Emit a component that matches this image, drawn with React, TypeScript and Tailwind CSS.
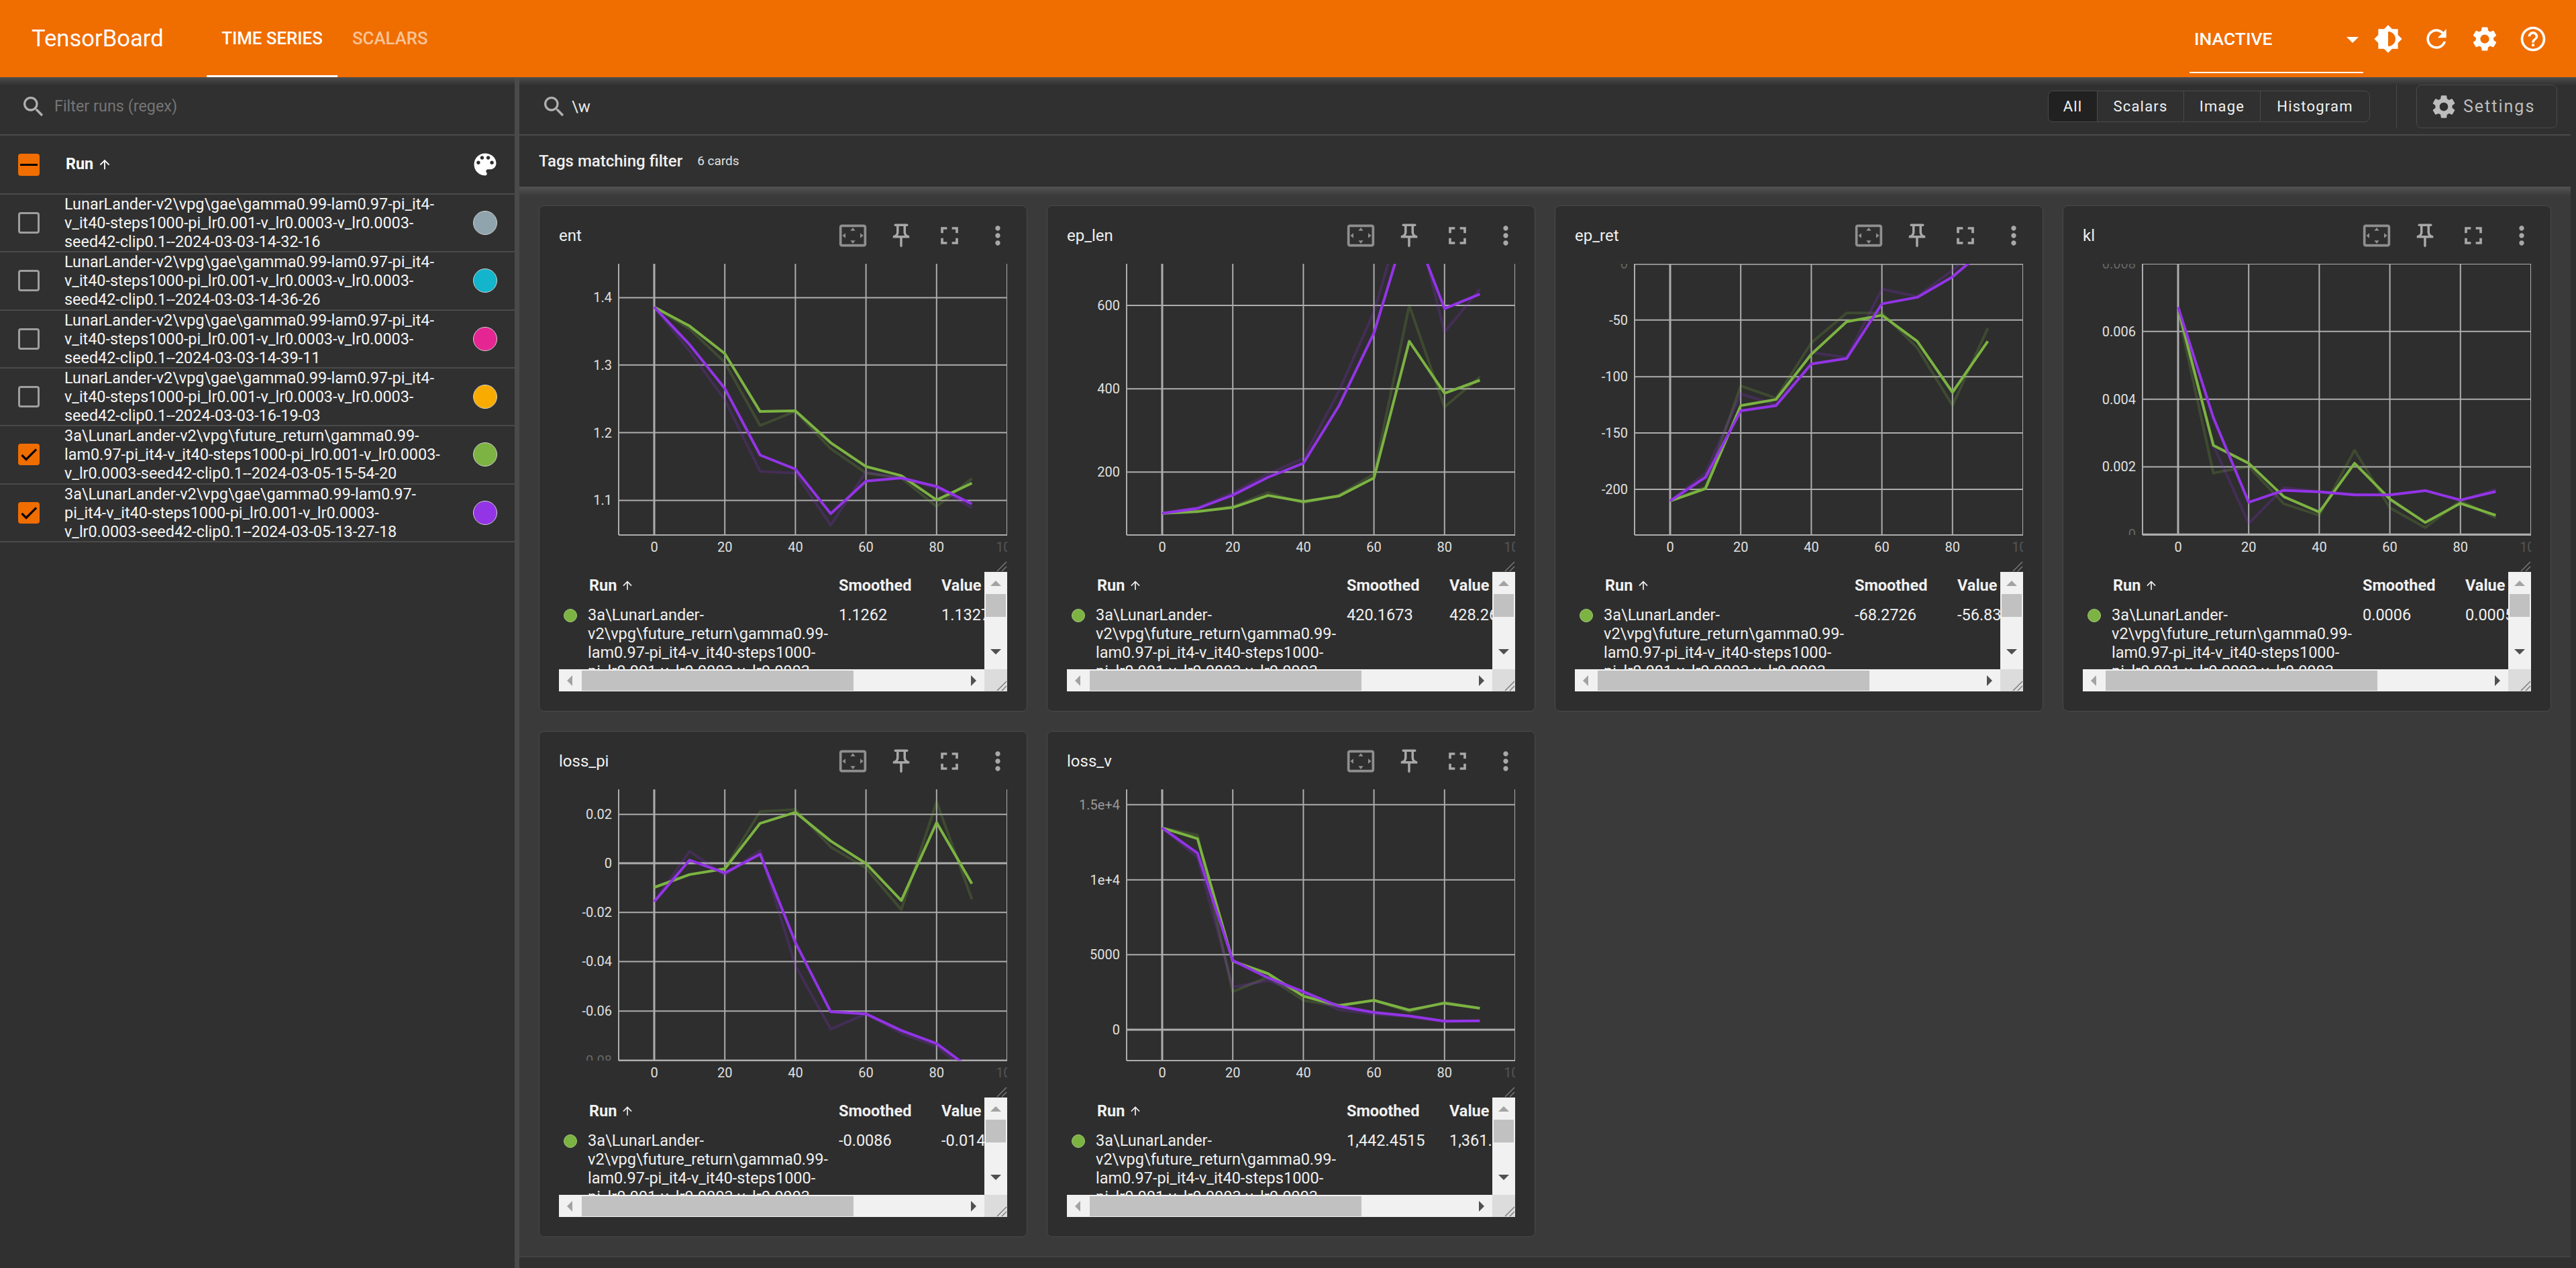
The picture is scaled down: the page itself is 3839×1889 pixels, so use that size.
const ICONS = {
  search: "M15.5 14h-.79l-.28-.27A6.471 6.471 0 0 0 16 9.5 6.5 6.5 0 1 0 9.5 16c1.61 0 3.09-.59 4.23-1.57l.27.28v.79l5 4.99L20.49 19l-4.99-5zm-6 0C7.01 14 5 11.99 5 9.5S7.01 5 9.5 5 14 7.01 14 9.5 11.99 14 9.5 14z",
  brightness: "M20 15.31L23.31 12 20 8.69V4h-4.69L12 .69 8.69 4H4v4.69L.69 12 4 15.31V20h4.69L12 23.31 15.31 20H20v-4.69zM12 18V6c3.31 0 6 2.69 6 6s-2.69 6-6 6z",
  refresh: "M17.65 6.35C16.2 4.9 14.21 4 12 4c-4.42 0-7.99 3.58-7.99 8s3.57 8 7.99 8c3.73 0 6.84-2.55 7.73-6h-2.08c-.82 2.33-3.04 4-5.65 4-3.31 0-6-2.69-6-6s2.69-6 6-6c1.66 0 3.14.69 4.22 1.78L13 11h7V4l-2.35 2.35z",
  settings: "M19.14 12.94c.04-.3.06-.61.06-.94 0-.32-.02-.64-.07-.94l2.03-1.58c.18-.14.23-.41.12-.61l-1.92-3.32c-.12-.22-.37-.29-.59-.22l-2.39.96c-.5-.38-1.03-.7-1.62-.94l-.36-2.54c-.04-.24-.24-.41-.48-.41h-3.84c-.24 0-.43.17-.47.41l-.36 2.54c-.59.24-1.13.57-1.62.94l-2.39-.96c-.22-.08-.47 0-.59.22L2.74 8.87c-.12.21-.08.47.12.61l2.03 1.58c-.05.3-.09.63-.09.94s.02.64.07.94l-2.03 1.58c-.18.14-.23.41-.12.61l1.92 3.32c.12.22.37.29.59.22l2.39-.96c.5.38 1.03.7 1.62.94l.36 2.54c.05.24.24.41.48.41h3.84c.24 0 .44-.17.47-.41l.36-2.54c.59-.24 1.13-.56 1.62-.94l2.39.96c.22.08.47 0 .59-.22l1.92-3.32c.12-.22.07-.47-.12-.61l-2.01-1.58zM12 15.6c-1.98 0-3.6-1.62-3.6-3.6s1.62-3.6 3.6-3.6 3.6 1.62 3.6 3.6-1.62 3.6-3.6 3.6z",
  help: "M11 18h2v-2h-2v2zm1-16C6.48 2 2 6.48 2 12s4.48 10 10 10 10-4.48 10-10S17.52 2 12 2zm0 18c-4.41 0-8-3.59-8-8s3.59-8 8-8 8 3.59 8 8-3.59 8-8 8zm0-14c-2.21 0-4 1.79-4 4h2c0-1.1.9-2 2-2s2 .9 2 2c0 2-3 1.75-3 5h2c0-2.25 3-2.5 3-5 0-2.21-1.79-4-4-4z",
  palette: "M12 3c-4.97 0-9 4.03-9 9s4.03 9 9 9c.83 0 1.5-.67 1.5-1.5 0-.39-.15-.74-.39-1.01-.23-.26-.38-.61-.38-.99 0-.83.67-1.5 1.5-1.5H16c2.76 0 5-2.24 5-5 0-4.42-4.03-8-9-8zm-5.5 9c-.83 0-1.5-.67-1.5-1.5S5.67 9 6.5 9 8 9.67 8 10.5 7.33 12 6.5 12zm3-4C8.67 8 8 7.33 8 6.5S8.67 5 9.5 5s1.5.67 1.5 1.5S10.33 8 9.5 8zm5 0c-.83 0-1.5-.67-1.5-1.5S13.67 5 14.5 5s1.5.67 1.5 1.5S15.33 8 14.5 8zm3 4c-.83 0-1.5-.67-1.5-1.5S16.67 9 17.5 9s1.5.67 1.5 1.5-.67 1.5-1.5 1.5z",
  pin: "M14 4v5c0 1.12.37 2.16 1 3H9c.65-.86 1-1.9 1-3V4h4m3-2H7c-.55 0-1 .45-1 1s.45 1 1 1h1v5c0 1.66-1.34 3-3 3v2h5.97v7l1 1 1-1v-7H19v-2c-1.66 0-3-1.34-3-3V4h1c.55 0 1-.45 1-1s-.45-1-1-1z",
  fullscreen: "M7 14H5v5h5v-2H7v-3zm-2-4h2V7h3V5H5v5zm12 7h-3v2h5v-5h-2v3zM14 5v2h3v3h2V5h-5z",
  more: "M12 8c1.1 0 2-.9 2-2s-.9-2-2-2-2 .9-2 2 .9 2 2 2zm0 2c-1.1 0-2 .9-2 2s.9 2 2 2 2-.9 2-2-.9-2-2-2zm0 6c-1.1 0-2 .9-2 2s.9 2 2 2 2-.9 2-2-.9-2-2-2z",
  fit: "M12.01 5.5L10 8h4l-1.99-2.5zM18 10v4l2.5-1.99L18 10zM6 10l-2.5 2.01L6 14v-4zm8 6h-4l2.01 2.5L14 16zm7-13H3c-1.1 0-2 .9-2 2v14c0 1.1.9 2 2 2h18c1.1 0 2-.9 2-2V5c0-1.1-.9-2-2-2zm0 16.01H3V4.99h18v14.02z",
  arrowUp: "M4 12l1.41 1.41L11 7.83V20h2V7.83l5.58 5.59L20 12l-8-8-8 8z",
};

function Icon({ d, className }: { d: string; className?: string }) {
  return (
    <svg viewBox="0 0 24 24" className={className} fill="currentColor">
      <path d={d} />
    </svg>
  );
}

const RUNS = [
  { name: "LunarLander-v2\\vpg\\gae\\gamma0.99-lam0.97-pi_it4-v_it40-steps1000-pi_lr0.001-v_lr0.0003-v_lr0.0003-seed42-clip0.1--2024-03-03-14-32-16", dot: "bg-[#90a4ae]", checked: false },
  { name: "LunarLander-v2\\vpg\\gae\\gamma0.99-lam0.97-pi_it4-v_it40-steps1000-pi_lr0.001-v_lr0.0003-v_lr0.0003-seed42-clip0.1--2024-03-03-14-36-26", dot: "bg-[#12b5cb]", checked: false },
  { name: "LunarLander-v2\\vpg\\gae\\gamma0.99-lam0.97-pi_it4-v_it40-steps1000-pi_lr0.001-v_lr0.0003-v_lr0.0003-seed42-clip0.1--2024-03-03-14-39-11", dot: "bg-[#e52592]", checked: false },
  { name: "LunarLander-v2\\vpg\\gae\\gamma0.99-lam0.97-pi_it4-v_it40-steps1000-pi_lr0.001-v_lr0.0003-v_lr0.0003-seed42-clip0.1--2024-03-03-16-19-03", dot: "bg-[#f9ab00]", checked: false },
  { name: "3a\\LunarLander-v2\\vpg\\future_return\\gamma0.99-lam0.97-pi_it4-v_it40-steps1000-pi_lr0.001-v_lr0.0003-v_lr0.0003-seed42-clip0.1--2024-03-05-15-54-20", dot: "bg-[#7cb342]", checked: true },
  { name: "3a\\LunarLander-v2\\vpg\\gae\\gamma0.99-lam0.97-pi_it4-v_it40-steps1000-pi_lr0.001-v_lr0.0003-v_lr0.0003-seed42-clip0.1--2024-03-05-13-27-18", dot: "bg-[#9334e6]", checked: true },
];

const GREEN_RUN =
  "3a\\LunarLander-v2\\vpg\\future_return\\gamma0.99-lam0.97-pi_it4-v_it40-steps1000-pi_lr0.001-v_lr0.0003-v_lr0.0003-seed42-clip0.1--2024-03-05-15-54-20";

type Tick = { at: number; label: string; faint?: boolean; dim?: boolean };
type Chart = {
  title: string;
  smoothed: string;
  value: string;
  // y values are pixels read off the plot: top and k turn them into plot pixels
  top: number;
  k: number;
  ticks: Tick[];
  greenSmooth: number[];
  greenRaw: number[];
  purpleSmooth: number[];
  purpleRaw: number[];
};

const CHARTS: Chart[] = [
  {
    title: "ent", smoothed: "1.1262", value: "1.1327", top: 192, k: 2.063,
    ticks: [{ at: 296, label: "1.4" }, { at: 503, label: "1.3" }, { at: 711, label: "1.2" }, { at: 919, label: "1.1" }],
    greenSmooth: [325, 383, 468, 646, 644, 742, 815, 843, 918, 866],
    greenRaw: [325, 392, 495, 689, 645, 760, 835, 850, 938, 852],
    purpleSmooth: [325, 440, 575, 780, 823, 960, 860, 850, 876, 930],
    purpleRaw: [325, 460, 610, 830, 835, 995, 832, 852, 880, 942],
  },
  {
    title: "ep_len", smoothed: "420.1673", value: "428.2617", top: 192, k: 2.063,
    ticks: [{ at: 320, label: "600" }, { at: 576, label: "400" }, { at: 832, label: "200" }],
    greenSmooth: [959, 953, 941, 904, 923, 906, 850, 430, 590, 550],
    greenRaw: [959, 955, 938, 895, 927, 903, 838, 320, 632, 540],
    purpleSmooth: [959, 944, 903, 848, 805, 630, 405, 47, 330, 285],
    purpleRaw: [959, 941, 895, 838, 790, 585, 340, -30, 402, 270],
  },
  {
    title: "ep_ret", smoothed: "-68.2726", value: "-56.8312", top: 192, k: 2.063,
    ticks: [{ at: 192, label: "0", faint: true }, { at: 365, label: "-50" }, { at: 539, label: "-100" }, { at: 712, label: "-150" }, { at: 885, label: "-200" }],
    greenSmooth: [921, 883, 628, 609, 470, 370, 350, 430, 587, 430],
    greenRaw: [921, 878, 567, 605, 435, 343, 343, 450, 627, 390],
    purpleSmooth: [921, 848, 644, 628, 500, 483, 315, 295, 232, 140],
    purpleRaw: [921, 835, 592, 625, 465, 480, 270, 292, 212, 118],
  },
  {
    title: "kl", smoothed: "0.0006", value: "0.0005", top: 192, k: 2.063,
    ticks: [{ at: 192, label: "0.008", faint: true }, { at: 400, label: "0.006" }, { at: 608, label: "0.004" }, { at: 816, label: "0.002" }, { at: 1024, label: "0", faint: true }],
    greenSmooth: [330, 750, 805, 908, 955, 805, 915, 987, 928, 965],
    greenRaw: [340, 835, 815, 930, 965, 765, 942, 1003, 920, 972],
    purpleSmooth: [325, 665, 925, 888, 893, 902, 902, 889, 918, 892],
    purpleRaw: [325, 750, 990, 880, 892, 900, 902, 888, 920, 885],
  },
  {
    title: "loss_pi", smoothed: "-0.0086", value: "-0.0143", top: 186, k: 1.938,
    ticks: [{ at: 258, label: "0.02" }, { at: 399, label: "0" }, { at: 541, label: "-0.02" }, { at: 683, label: "-0.04" }, { at: 826, label: "-0.06" }, { at: 968, label: "-0.08", faint: true }],
    greenSmooth: [469, 432, 415, 284, 252, 335, 400, 507, 282, 458],
    greenRaw: [469, 432, 415, 250, 244, 352, 413, 533, 222, 503],
    purpleSmooth: [510, 390, 427, 373, 628, 828, 834, 882, 920, 995],
    purpleRaw: [510, 365, 433, 362, 695, 878, 834, 890, 928, 1010],
  },
  {
    title: "loss_v", smoothed: "1,442.4515", value: "1,361.6208", top: 186, k: 1.938,
    ticks: [{ at: 230, label: "1.5e+4", dim: true }, { at: 447, label: "1e+4" }, { at: 663, label: "5000" }, { at: 880, label: "0" }],
    greenSmooth: [297, 328, 682, 718, 783, 810, 795, 823, 803, 818],
    greenRaw: [297, 318, 770, 728, 795, 812, 795, 828, 800, 818],
    purpleSmooth: [297, 370, 680, 730, 770, 812, 830, 840, 855, 854],
    purpleRaw: [297, 382, 757, 738, 775, 822, 835, 842, 857, 854],
  },
];

const PLOT_LEFT = 89;
const PLOT_W = 579;
const PLOT_H = 404;
const X0 = PLOT_LEFT + 53;
const X_STEP = 5.26;

function LineChart({ chart, id }: { chart: Chart; id: number }) {
  const toY = (p: number) => (p - chart.top) / chart.k;
  const pts = (ys: number[]) =>
    ys.map((p, i) => `${X0 + i * 10 * X_STEP},${toY(p).toFixed(1)}`).join(" ");
  const xTicks = [0, 20, 40, 60, 80, 100];

  return (
    <svg width={668} height={442} className="block font-['Roboto',sans-serif]">
      <defs>
        <clipPath id={`plot-${id}`}>
          <rect x={PLOT_LEFT} y={0} width={PLOT_W} height={PLOT_H} />
        </clipPath>
        <clipPath id={`ylabels-${id}`}>
          <rect x={0} y={0} width={PLOT_LEFT} height={PLOT_H} />
        </clipPath>
      </defs>

      {xTicks.map((t) => (
        <line key={t} x1={X0 + t * X_STEP} x2={X0 + t * X_STEP} y1={0} y2={PLOT_H} stroke="#adadad" strokeWidth={t === 0 ? 3 : 2} />
      ))}
      {chart.ticks.map((t) => (
        <line key={t.label} x1={PLOT_LEFT} x2={PLOT_LEFT + PLOT_W} y1={toY(t.at)} y2={toY(t.at)} stroke="#adadad" strokeWidth={t.label === "0" ? 3 : 2} />
      ))}
      <line x1={PLOT_LEFT} x2={PLOT_LEFT} y1={0} y2={PLOT_H} stroke="#adadad" strokeWidth={2} />
      <line x1={PLOT_LEFT} x2={PLOT_LEFT + PLOT_W} y1={PLOT_H} y2={PLOT_H} stroke="#adadad" strokeWidth={2} />

      <g clipPath={`url(#plot-${id})`} fill="none" strokeWidth={4} strokeLinejoin="round">
        <polyline points={pts(chart.greenRaw)} stroke="#7cb342" strokeOpacity={0.22} />
        <polyline points={pts(chart.purpleRaw)} stroke="#9334e6" strokeOpacity={0.22} />
        <polyline points={pts(chart.greenSmooth)} stroke="#7cb342" />
        <polyline points={pts(chart.purpleSmooth)} stroke="#9334e6" />
      </g>

      <g clipPath={`url(#ylabels-${id})`} fontSize={20} textAnchor="end">
        {chart.ticks.map((t) => (
          <text key={t.label} x={79} y={toY(t.at) + 7} fill={t.faint ? "#666" : t.dim ? "#999" : "#e0e0e0"}>
            {t.label}
          </text>
        ))}
      </g>
      {xTicks.map((t) => (
        <text key={t} x={X0 + t * X_STEP} y={429} fontSize={20} textAnchor="middle" fill={t === 100 ? "#555" : "#e0e0e0"}>
          {t}
        </text>
      ))}
    </svg>
  );
}

function ResizeGrip({ className }: { className?: string }) {
  return (
    <svg viewBox="0 0 16 16" className={className}>
      <line x1="1" y1="15" x2="15" y2="1" stroke="#7a7a7a" strokeWidth="1.4" />
      <line x1="8" y1="15" x2="15" y2="8" stroke="#7a7a7a" strokeWidth="1.4" />
    </svg>
  );
}

function ChartCard({ chart, id }: { chart: Chart; id: number }) {
  return (
    <div className="h-[754px] rounded-lg border border-[#4a4a4a] bg-[#2e2e2e] pl-[29px] pr-[7px] pt-[8px]">
      <div className="flex h-[72px] items-center text-[#a8a8a8]">
        <div className="flex-1 text-[24px] text-[#f0f0f0]">{chart.title}</div>
        <button className="flex h-[72px] w-[72px] items-center justify-center">
          <Icon d={ICONS.fit} className="h-[44px] w-[44px] text-[#8f8f8f]" />
        </button>
        <button className="flex h-[72px] w-[72px] items-center justify-center">
          <Icon d={ICONS.pin} className="h-[42px] w-[42px]" />
        </button>
        <button className="flex h-[72px] w-[72px] items-center justify-center">
          <Icon d={ICONS.fullscreen} className="h-[44px] w-[44px]" />
        </button>
        <button className="flex h-[72px] w-[72px] items-center justify-center">
          <Icon d={ICONS.more} className="h-[44px] w-[44px]" />
        </button>
      </div>

      <div className="relative mt-[6px] h-[459px] w-[668px]">
        <LineChart chart={chart} id={id} />
        <ResizeGrip className="absolute bottom-0 right-0 h-[16px] w-[16px]" />
      </div>

      {/* tooltip table with its native-looking scrollbars on top */}
      <div className="relative h-[178px] w-[668px] overflow-hidden text-[23.5px] leading-[28px] text-[#f0f0f0]">
        <div className="flex pt-[6px] font-bold">
          <div className="flex w-[417px] items-center pl-[45px]">
            Run
            <Icon d={ICONS.arrowUp} className="ml-[6px] h-[20px] w-[20px] font-normal" />
          </div>
          <div className="w-[153px]">Smoothed</div>
          <div>Value</div>
        </div>
        <div className="flex pt-[16px]">
          <div className="w-[43px] shrink-0 pl-[7px] pt-[5px]">
            <div className="h-[20px] w-[20px] rounded-full border border-[#a5c97c] bg-[#7cb342]" />
          </div>
          <div className="w-[374px] shrink-0 pr-[6px]">{GREEN_RUN}</div>
          <div className="w-[153px] shrink-0">{chart.smoothed}</div>
          <div className="whitespace-nowrap">{chart.value}</div>
        </div>

        <div className="absolute right-0 top-0 flex h-full w-[34px] flex-col items-center bg-[#f1f1f1]">
          <div className="mt-[13px] h-0 w-0 border-x-[8px] border-b-[8px] border-x-transparent border-b-[#a3a3a3]" />
          <div className="mt-[12px] h-[34px] w-[30px] bg-[#c1c1c1]" />
          <div className="mt-[48px] h-0 w-0 border-x-[8px] border-t-[8px] border-x-transparent border-t-[#505050]" />
        </div>
        <div className="absolute bottom-0 left-0 right-[34px] flex h-[33px] items-center bg-[#f1f1f1]">
          <div className="ml-[12px] h-0 w-0 border-y-[8px] border-r-[8px] border-y-transparent border-r-[#a3a3a3]" />
          <div className="ml-[14px] h-[30px] w-[405px] bg-[#c1c1c1]" />
          <div className="ml-auto mr-[12px] h-0 w-0 border-y-[8px] border-l-[8px] border-y-transparent border-l-[#505050]" />
        </div>
        <div className="absolute bottom-0 right-0 flex h-[33px] w-[34px] items-end justify-end bg-[#dcdcdc]">
          <ResizeGrip className="h-[16px] w-[16px]" />
        </div>
      </div>
    </div>
  );
}

function Checkbox({ checked, mixed }: { checked?: boolean; mixed?: boolean }) {
  if (mixed) {
    return (
      <div className="flex h-[33px] w-[32px] shrink-0 items-center justify-center rounded-[4px] bg-[#f06d00]">
        <div className="h-[3px] w-[26px] bg-black" />
      </div>
    );
  }
  if (checked) {
    return (
      <div className="h-[32px] w-[32px] shrink-0 rounded-[4px] bg-[#f06d00]">
        <svg viewBox="0 0 24 24" className="h-full w-full" fill="none" stroke="#000" strokeWidth="2.4">
          <path d="M4.1 12.7 9 17.6 20.3 6.3" />
        </svg>
      </div>
    );
  }
  return <div className="h-[32px] w-[32px] shrink-0 rounded-[4px] border-[3px] border-[#9e9e9e]" />;
}

function Sidebar() {
  return (
    <aside className="flex w-[774px] shrink-0 flex-col border-r-[7px] border-[#4a4a4a] bg-[#303030]">
      <div className="flex h-[87px] shrink-0 items-center border-b-2 border-[#4a4a4a] pl-[30px] pt-[2px]">
        <Icon d={ICONS.search} className="h-[40px] w-[40px] text-[#b0b0b0]" />
        <span className="ml-[11px] text-[23.4px] text-[#757575]">Filter runs (regex)</span>
      </div>
      <div className="flex h-[88px] shrink-0 items-center border-b-2 border-[#4a4a4a] pl-[27px]">
        <Checkbox mixed />
        <div className="ml-[39px] flex items-center text-[23.4px] font-bold text-white">
          Run
          <Icon d={ICONS.arrowUp} className="ml-[6px] h-[22px] w-[22px]" />
        </div>
        <Icon d={ICONS.palette} className="ml-auto mr-[22px] h-[44px] w-[44px] text-white" />
      </div>
      {RUNS.map((run) => (
        <div key={run.name} className="flex h-[86.33px] shrink-0 items-center border-b-2 border-[#4a4a4a] pl-[27px]">
          <Checkbox checked={run.checked} />
          <div className="ml-[37px] w-[567px] text-[23.4px] leading-[28px] text-[#f5f5f5]">{run.name}</div>
          <div className={`ml-auto mr-[26px] h-[36px] w-[36px] rounded-full border border-[#d0d0d0] ${run.dot}`} />
        </div>
      ))}
    </aside>
  );
}

function Header() {
  return (
    <header className="relative flex h-[115px] shrink-0 items-center bg-[#f06d00] text-white">
      <div className="ml-[47px] w-[261px] text-[34.6px]">TensorBoard</div>
      <div className="flex h-full w-[195px] items-center justify-center border-b-[3px] border-white pt-[3px] text-[25.8px] font-medium">
        TIME SERIES
      </div>
      <div className="flex h-full items-center pl-[22px] text-[25.8px] font-medium text-white/60">SCALARS</div>

      <div className="relative ml-auto mr-[1px] flex h-full w-[259px] items-center pl-[7px] text-[26.5px] font-medium">
        INACTIVE
        <div className="absolute right-[7px] top-[55px] h-0 w-0 border-x-[9px] border-t-[9px] border-x-transparent border-t-white" />
        <div className="absolute bottom-[6px] left-0 right-0 h-[2px] bg-white" />
      </div>
      <div className="mr-[28px] flex">
        {[ICONS.brightness, ICONS.refresh, ICONS.settings, ICONS.help].map((d) => (
          <div key={d} className="flex h-[72px] w-[72px] items-center justify-center">
            <Icon d={d} className="h-[44px] w-[44px]" />
          </div>
        ))}
      </div>
      <div className="absolute left-0 right-0 top-full z-10 h-[12px] bg-gradient-to-b from-[#4d4d4d] to-transparent" />
    </header>
  );
}

function FilterChips() {
  const chips = [
    { label: "All", w: "w-[73px]", active: true },
    { label: "Scalars", w: "w-[129px]" },
    { label: "Image", w: "w-[114px]" },
    { label: "Histogram", w: "w-[162px]" },
  ];
  return (
    <div className="flex h-[47px] overflow-hidden rounded-lg border border-[#4a4a4a]">
      {chips.map((c) => (
        <div
          key={c.label}
          className={`flex items-center justify-center border-r border-[#4a4a4a] text-[22px] tracking-[1.2px] text-[#f0f0f0] last:border-r-0 ${c.w} ${c.active ? "bg-[#212121]" : ""}`}
        >
          {c.label}
        </div>
      ))}
    </div>
  );
}

export default function App() {
  return (
    <div className="flex h-[1889px] w-[3839px] flex-col overflow-hidden bg-[#303030] font-['Roboto',sans-serif]">
      <Header />
      <div className="flex min-h-0 flex-1">
        <Sidebar />
        <main className="flex min-w-0 flex-1 flex-col pr-[8px]">
          <div className="flex h-[87px] shrink-0 items-center border-b-2 border-[#4a4a4a] pl-[32px] pt-[2px]">
            <Icon d={ICONS.search} className="h-[40px] w-[40px] text-[#b0b0b0]" />
            <span className="ml-[6px] text-[24px] text-[#e8e8e8]">\w</span>
            <div className="ml-auto">
              <FilterChips />
            </div>
            <div className="ml-[39px] h-[65px] w-px bg-[#4a4a4a]" />
            <div className="ml-[29px] mr-[20px] flex h-[65px] w-[210px] items-center rounded-lg border border-[#4a4a4a] pl-[19px] text-[25px] tracking-[2px] text-[#bdbdbd]">
              <Icon d={ICONS.settings} className="h-[42px] w-[42px]" />
              <span className="ml-[8px]">Settings</span>
            </div>
          </div>

          <div className="flex h-[76px] shrink-0 items-center pl-[29px] text-[#f0f0f0]">
            <span className="text-[24px] font-medium">Tags matching filter</span>
            <span className="ml-[22px] text-[19px] text-[#e0e0e0]">6 cards</span>
          </div>

          <div className="flex-1 bg-[linear-gradient(#525252,#3a3a3a_14px)] pl-[29px] pt-[28px]">
            <div className="grid grid-cols-[repeat(4,728px)] gap-x-[29px] gap-y-[29px]">
              {CHARTS.map((c, i) => (
                <ChartCard key={c.title} chart={c} id={i} />
              ))}
            </div>
          </div>
          <div className="h-[17px] shrink-0 border-t border-[#4a4a4a] bg-[#303030]" />
        </main>
      </div>
    </div>
  );
}
